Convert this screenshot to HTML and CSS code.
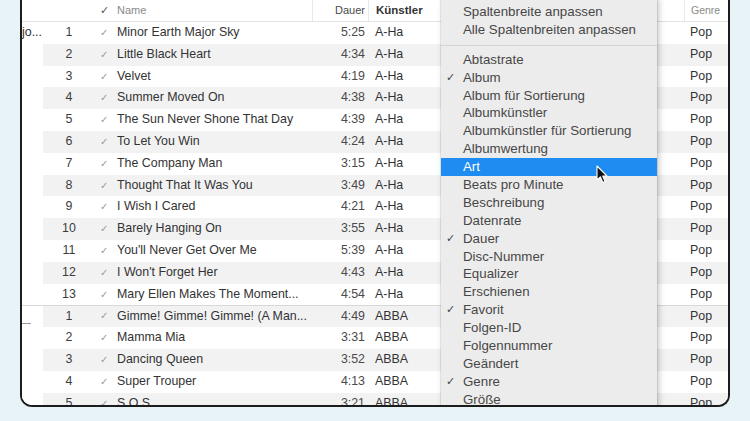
FILE: index.html
```html
<!DOCTYPE html>
<html lang="de">
<head>
  <meta charset="UTF-8" />
  <title>Mediathek – Titel</title>
  <meta name="viewport" content="width=device-width, initial-scale=1.0" />
  <link rel="stylesheet" href="styles.css">
</head>
<body>
  <div class="card">
    <div class="head">
      <span class="alb"></span>
      <span class="num"></span>
      <span class="chk">✓</span>
      <span class="name">Name</span>
      <span class="dur">Dauer</span>
      <span class="art sorted">Künstler</span>
      <span class="genre">Genre</span>
    </div>

    <div class="list">
      <div class="row"><span class="alb">jo...</span><span class="num">1</span><span class="chk">✓</span><span class="name">Minor Earth Major Sky</span><span class="dur">5:25</span><span class="art">A-Ha</span><span class="genre">Pop</span></div>
      <div class="row"><span class="alb"></span><span class="num">2</span><span class="chk">✓</span><span class="name">Little Black Heart</span><span class="dur">4:34</span><span class="art">A-Ha</span><span class="genre">Pop</span></div>
      <div class="row"><span class="alb"></span><span class="num">3</span><span class="chk">✓</span><span class="name">Velvet</span><span class="dur">4:19</span><span class="art">A-Ha</span><span class="genre">Pop</span></div>
      <div class="row"><span class="alb"></span><span class="num">4</span><span class="chk">✓</span><span class="name">Summer Moved On</span><span class="dur">4:38</span><span class="art">A-Ha</span><span class="genre">Pop</span></div>
      <div class="row"><span class="alb"></span><span class="num">5</span><span class="chk">✓</span><span class="name">The Sun Never Shone That Day</span><span class="dur">4:39</span><span class="art">A-Ha</span><span class="genre">Pop</span></div>
      <div class="row"><span class="alb"></span><span class="num">6</span><span class="chk">✓</span><span class="name">To Let You Win</span><span class="dur">4:24</span><span class="art">A-Ha</span><span class="genre">Pop</span></div>
      <div class="row"><span class="alb"></span><span class="num">7</span><span class="chk">✓</span><span class="name">The Company Man</span><span class="dur">3:15</span><span class="art">A-Ha</span><span class="genre">Pop</span></div>
      <div class="row"><span class="alb"></span><span class="num">8</span><span class="chk">✓</span><span class="name">Thought That It Was You</span><span class="dur">3:49</span><span class="art">A-Ha</span><span class="genre">Pop</span></div>
      <div class="row"><span class="alb"></span><span class="num">9</span><span class="chk">✓</span><span class="name">I Wish I Cared</span><span class="dur">4:21</span><span class="art">A-Ha</span><span class="genre">Pop</span></div>
      <div class="row"><span class="alb"></span><span class="num">10</span><span class="chk">✓</span><span class="name">Barely Hanging On</span><span class="dur">3:55</span><span class="art">A-Ha</span><span class="genre">Pop</span></div>
      <div class="row"><span class="alb"></span><span class="num">11</span><span class="chk">✓</span><span class="name">You'll Never Get Over Me</span><span class="dur">5:39</span><span class="art">A-Ha</span><span class="genre">Pop</span></div>
      <div class="row"><span class="alb"></span><span class="num">12</span><span class="chk">✓</span><span class="name">I Won't Forget Her</span><span class="dur">4:43</span><span class="art">A-Ha</span><span class="genre">Pop</span></div>
      <div class="row"><span class="alb"></span><span class="num">13</span><span class="chk">✓</span><span class="name">Mary Ellen Makes The Moment...</span><span class="dur">4:54</span><span class="art">A-Ha</span><span class="genre">Pop</span></div>
      <!-- ABBA -->
      <div class="row group"><span class="alb"><i class="dash"></i></span><span class="num">1</span><span class="chk">✓</span><span class="name">Gimme! Gimme! Gimme! (A Man...</span><span class="dur">4:49</span><span class="art">ABBA</span><span class="genre">Pop</span></div>
      <div class="row"><span class="alb"></span><span class="num">2</span><span class="chk">✓</span><span class="name">Mamma Mia</span><span class="dur">3:31</span><span class="art">ABBA</span><span class="genre">Pop</span></div>
      <div class="row"><span class="alb"></span><span class="num">3</span><span class="chk">✓</span><span class="name">Dancing Queen</span><span class="dur">3:52</span><span class="art">ABBA</span><span class="genre">Pop</span></div>
      <div class="row"><span class="alb"></span><span class="num">4</span><span class="chk">✓</span><span class="name">Super Trouper</span><span class="dur">4:13</span><span class="art">ABBA</span><span class="genre">Pop</span></div>
      <div class="row"><span class="alb"></span><span class="num">5</span><span class="chk">✓</span><span class="name">S.O.S</span><span class="dur">3:21</span><span class="art">ABBA</span><span class="genre">Pop</span></div>
    </div>

    <!-- column context menu -->
    <div class="menu">
      <div class="item">Spaltenbreite anpassen</div>
      <div class="item">Alle Spaltenbreiten anpassen</div>
      <div class="sep"></div>
      <div class="item">Abtastrate</div>
      <div class="item on">Album</div>
      <div class="item">Album für Sortierung</div>
      <div class="item">Albumkünstler</div>
      <div class="item">Albumkünstler für Sortierung</div>
      <div class="item">Albumwertung</div>
      <div class="item sel">Art</div>
      <div class="item">Beats pro Minute</div>
      <div class="item">Beschreibung</div>
      <div class="item">Datenrate</div>
      <div class="item on">Dauer</div>
      <div class="item">Disc-Nummer</div>
      <div class="item">Equalizer</div>
      <div class="item">Erschienen</div>
      <div class="item on">Favorit</div>
      <div class="item">Folgen-ID</div>
      <div class="item">Folgennummer</div>
      <div class="item">Geändert</div>
      <div class="item on">Genre</div>
      <div class="item">Größe</div>
    </div>

    <svg class="cursor" width="13" height="19" viewBox="0 0 13 19">
      <path d="M1 1 L1 15 L4.4 11.8 L6.8 17.4 L9 16.4 L6.7 11 L11 11 Z" fill="#111" stroke="#fff" stroke-width="1.1" stroke-linejoin="round"/>
    </svg>
  </div>
</body>
</html>
```

FILE: styles.css
```css
:root {
  --page-bg: #e8f3f8;
  --frame: #1c1c1c;
  --stripe: #f2f2f3;
  --text: #333;
  --muted: #8a8a8a;
  --menu-bg: #ececec;
  --menu-sel: #1f8cf1;
}

html, body {
  height: 100%;
}

body {
  margin: 0;
  background: var(--page-bg);
  font-family: 'Liberation Sans', Arial, sans-serif;
  color: var(--text);
  overflow: hidden;
}

.card {
  position: relative;
  box-sizing: border-box;
  height: 407px;
  margin: 0 20px;
  background: #fff;
  border: 2px solid var(--frame);
  border-top: none;
  border-radius: 0 0 12px 12px;
  overflow: hidden;
}

.head, .row {
  display: grid;
  grid-template-columns: 21px 52px 18px 199px 56px 1fr 44px;
  white-space: nowrap;
}

.head > span, .row > span {
  overflow: hidden;
}

.head {
  box-sizing: border-box;
  height: 22px;
  line-height: 21px;
  font-size: 11px;
  color: var(--muted);
  border-bottom: 1px solid #e3e3e3;
}

.head .chk {
  color: #555;
  font-size: 11px;
}

.head .dur, .head .art, .head .genre {
  border-left: 1px solid #e8e8e8;
}

.head .sorted {
  color: #333;
  font-weight: bold;
  font-size: 11.5px;
}

.head .genre {
  font-size: 10.5px;
}

.row {
  box-sizing: border-box;
  height: 21.8px;
  line-height: 21.8px;
  font-size: 12.4px;
}

.row:nth-child(even) {
  background: var(--stripe);
}

.row.group {
  border-top: 1px solid #d8d8d8;
  line-height: 20.8px;
}

.alb {
  background: #fff;
  color: #333;
}

.dash {
  display: block;
  width: 9px;
  height: 1px;
  margin-top: 17px;
  background: #9a9a9a;
}

.num {
  text-align: center;
  color: #3c3c3c;
}

.chk {
  padding-left: 5px;
  font-size: 9.5px;
  color: #999;
}

.name {
  padding-left: 4px;
}

.dur {
  text-align: right;
  padding-right: 3px;
  color: #4a4a4a;
}

.art {
  padding-left: 7px;
}

.genre {
  padding-left: 6px;
}

/* context menu */
.menu {
  position: absolute;
  left: 419px;
  top: -1px;
  width: 216px;
  padding-top: 4px;
  height: 430px;
  background: var(--menu-bg);
  box-shadow: 0 0 0 1px rgba(0, 0, 0, 0.08), 2px 0 6px rgba(0, 0, 0, 0.22);
}

.item {
  position: relative;
  height: 17.9px;
  line-height: 17.9px;
  padding-left: 22px;
  font-size: 13.3px;
  color: #474747;
  white-space: nowrap;
}

.item.on::before {
  content: "✓";
  position: absolute;
  left: 5px;
  font-size: 11px;
  color: #444;
}

.item.sel {
  background: var(--menu-sel);
  color: #fff;
}

.sep {
  height: 12px;
  box-sizing: border-box;
  background: linear-gradient(#d4d4d4, #d4d4d4) 0 6px / 100% 1px no-repeat;
}

.cursor {
  position: absolute;
  left: 574px;
  top: 165px;
}
```
